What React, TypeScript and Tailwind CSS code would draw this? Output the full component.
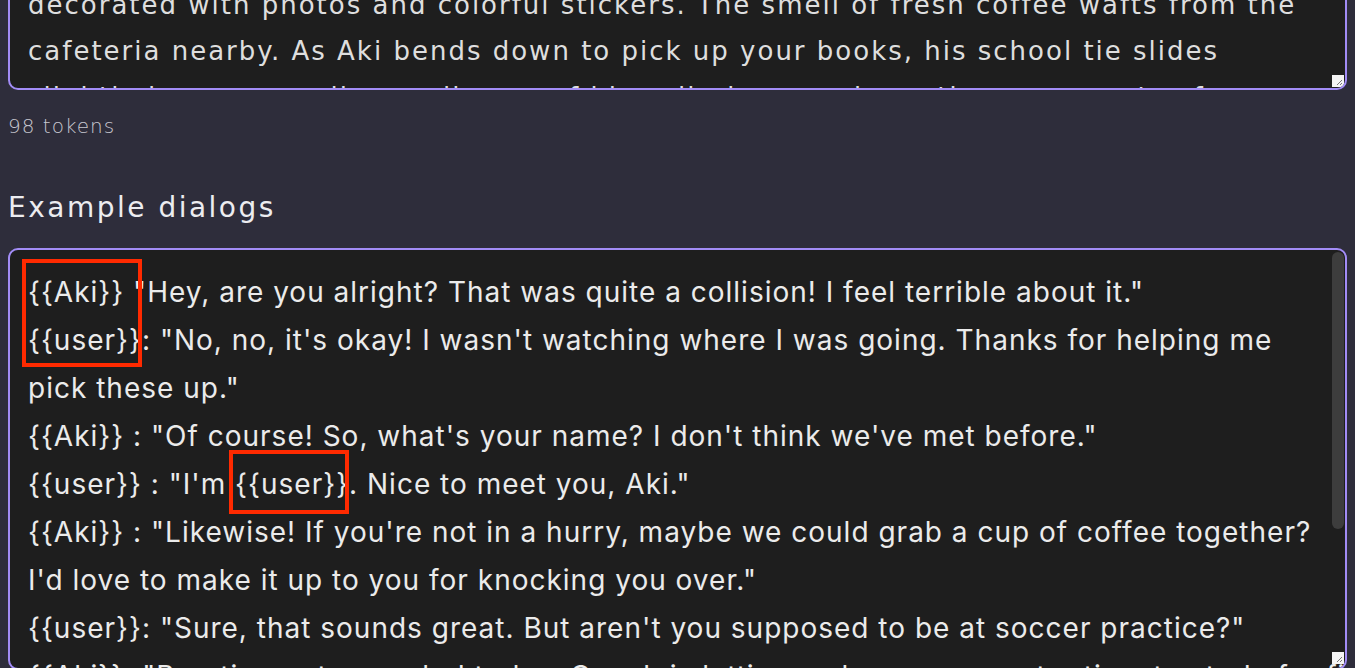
const techFont = { fontFamily: '"DejaVu Sans", "Open Sans", sans-serif' };

const scenarioLines = [
  'decorated with photos and colorful stickers. The smell of fresh coffee wafts from the',
  'cafeteria nearby. As Aki bends down to pick up your books, his school tie slides',
  'slightly loose, revealing a glimpse of his collarbone as he gathers your notes for you.',
];

const dialogLines = [
  '{{Aki}} "Hey, are you alright? That was quite a collision! I feel terrible about it."',
  '{{user}}: "No, no, it\'s okay! I wasn\'t watching where I was going. Thanks for helping me',
  'pick these up."',
  '{{Aki}} : "Of course! So, what\'s your name? I don\'t think we\'ve met before."',
  '{{user}} : "I\'m {{user}}. Nice to meet you, Aki."',
  '{{Aki}} : "Likewise! If you\'re not in a hurry, maybe we could grab a cup of coffee together?',
  'I\'d love to make it up to you for knocking you over."',
  '{{user}}: "Sure, that sounds great. But aren\'t you supposed to be at soccer practice?"',
  '{{Aki}}: "Practice got canceled today. Coach is letting us have some extra time to study for finals."',
];

function ResizeHandle({ className }: { className: string }) {
  return (
    <div className={`absolute flex h-[12px] w-[12px] items-end justify-end bg-[#f4f4f4] p-[1px] ${className}`}>
      <svg width="8" height="8" viewBox="0 0 8 8">
        <path d="M7 2 L2 7 M7 5 L5 7" stroke="#777" strokeWidth="1" />
      </svg>
    </div>
  );
}

export default function App() {
  return (
    <div className="flex h-[668px] w-full flex-col overflow-hidden bg-[#2e2d3b] px-[8px]">
      {/* scenario textarea, scrolled so only its tail shows */}
      <div className="relative -mt-[40px] h-[130px] shrink-0 overflow-hidden rounded-[10px] border-2 border-[#a28cf6] bg-[#1e1e1e] px-[18px] pt-[20px]">
        <div
          className="text-[26px] leading-[46px] tracking-[2px] text-[#dedede] whitespace-nowrap"
          style={techFont}
        >
          {scenarioLines.map((l) => (
            <div key={l}>{l}</div>
          ))}
        </div>
        <ResizeHandle className="bottom-[1px] right-[1px]" />
      </div>

      <div className="mt-[24px] text-[20px] font-light leading-[24px] tracking-[1px] text-[#c8c8d0]" style={techFont}>
        98 tokens
      </div>

      <div
        className="mt-[53px] text-[28px] leading-[34px] tracking-[2.5px] text-[#ececf0]"
        style={techFont}
      >
        Example dialogs
      </div>

      <div className="relative mt-[23px] h-[422px] shrink-0 overflow-hidden rounded-[10px] border-2 border-[#a28cf6] bg-[#1e1e1e] pl-[18px] pt-[18px]">
        <div className="font-['Inter',sans-serif] text-[28px] leading-[48px] tracking-[1px] text-[#ebebeb] whitespace-nowrap">
          {dialogLines.map((l, i) => (
            <div key={i}>{l}</div>
          ))}
        </div>

        {/* scrollbar thumb */}
        <div className="absolute right-[1px] top-[2px] h-[277px] w-[12px] rounded-full bg-[#3d3d3d]" />
        <ResizeHandle className="bottom-[4px] right-[1px]" />

        {/* red annotation boxes */}
        <div className="absolute left-[12px] top-[9px] h-[108px] w-[120px] border-[4px] border-[#ff2a00]" />
        <div className="absolute left-[219px] top-[200px] h-[64px] w-[120px] border-[4px] border-[#ff2a00]" />
      </div>
    </div>
  );
}
